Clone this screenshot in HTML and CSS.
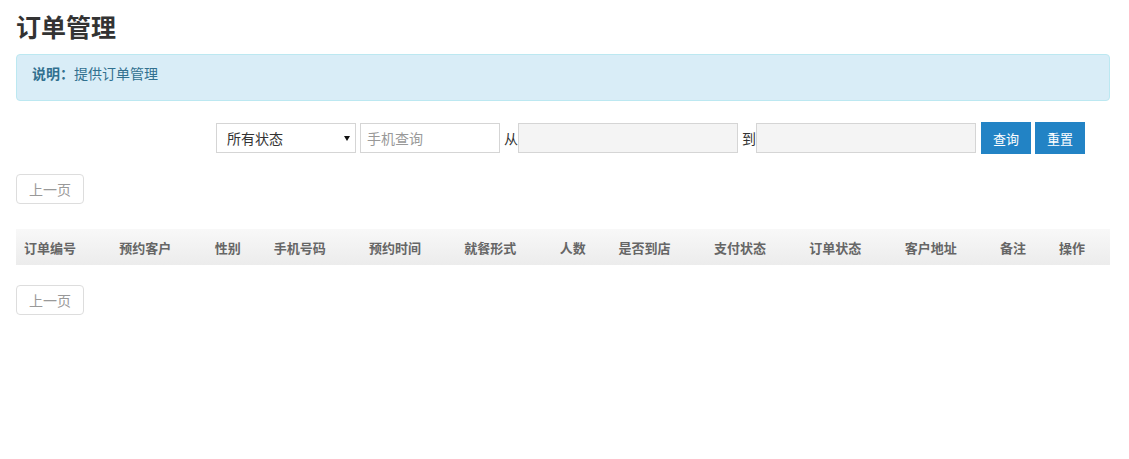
FILE: index.html
```html
<!DOCTYPE html>
<html lang="zh-CN">
<head>
    <meta charset="UTF-8">
    <title>订单管理</title>
    <link rel="stylesheet" href="styles.css">
</head>
<body>

<div class="page">
    <h1>订单管理</h1>

    <div class="alert">
        <b>说明：</b>提供订单管理
    </div>

    <form class="search">
        <div class="select-wrap">
            <select class="status-select">
                <option>所有状态</option>
                <option>已支付</option>
                <option>未支付</option>
            </select>
        </div>
        <input type="text" class="phone" placeholder="手机查询">
        <span class="label">从</span>
        <input type="text" class="date" readonly>
        <span class="label">到</span>
        <input type="text" class="date" readonly>
        <button type="button" class="btn first">查询</button>
        <button type="reset" class="btn">重置</button>
    </form>

    <div class="pager">
        <a href="#" class="page-btn">上一页</a>
    </div>

    <table class="orders">
        <thead>
            <tr>
                <th>订单编号</th>
                <th>预约客户</th>
                <th>性别</th>
                <th>手机号码</th>
                <th>预约时间</th>
                <th>就餐形式</th>
                <th>人数</th>
                <th>是否到店</th>
                <th>支付状态</th>
                <th>订单状态</th>
                <th>客户地址</th>
                <th>备注</th>
                <th>操作</th>
            </tr>
        </thead>
        <tbody></tbody>
    </table>

    <div class="pager">
        <a href="#" class="page-btn">上一页</a>
    </div>
</div>

</body>
</html>
```

FILE: styles.css
```css
body {
    margin: 0;
    font-family: "Noto Sans CJK SC", "Liberation Sans", sans-serif;
    font-size: 14px;
    color: #333;
    background: #fff;
}
.page {
    padding: 0 19px 0 16px;
}
h1 {
    margin: 0;
    padding-top: 9px;
    font-size: 25px;
    line-height: 34px;
    font-weight: bold;
    color: #333;
}
.alert {
    margin-top: 11px;
    padding: 9px 15px 18px;
    line-height: 18px;
    font-size: 14px;
    background-color: #d9edf7;
    border: 1px solid #bce8f1;
    border-radius: 4px;
    color: #31708f;
}
.search {
    display: flex;
    align-items: center;
    margin-top: 21px;
    padding-left: 200px;
    height: 32px;
}
.select-wrap {
    position: relative;
}
.select-wrap::after {
    content: "";
    position: absolute;
    right: 6px;
    top: 13px;
    border-left: 3px solid transparent;
    border-right: 3px solid transparent;
    border-top: 5px solid #111;
    pointer-events: none;
}
.status-select {
    appearance: none;
    -webkit-appearance: none;
    width: 140px;
    height: 30px;
    padding: 0 0 0 10px;
    border: 1px solid #d5d5d5;
    border-radius: 0;
    background: #fff;
    font-family: inherit;
    font-size: 14px;
    color: #333;
}
input {
    box-sizing: border-box;
    height: 30px;
    border: 1px solid #d5d5d5;
    padding: 0 6px;
    font-family: inherit;
    font-size: 14px;
    color: #333;
    outline: none;
}
input::placeholder {
    color: #999;
}
.phone {
    width: 140px;
    margin-left: 4px;
}
.date {
    width: 220px;
    background: #f4f4f4;
}
.label {
    margin: 0 0 0 4px;
    width: 14px;
    line-height: 30px;
}
.btn {
    width: 50px;
    height: 32px;
    margin-left: 4px;
    padding: 0;
    border: none;
    background-color: #2283c5;
    color: #fff;
    font-family: inherit;
    font-size: 13px;
    cursor: pointer;
}
.btn.first {
    margin-left: 5px;
}
.pager {
    margin-top: 20px;
    height: 30px;
}
.page-btn {
    display: inline-block;
    box-sizing: border-box;
    width: 68px;
    height: 30px;
    line-height: 28px;
    text-align: center;
    border: 1px solid #ddd;
    border-radius: 4px;
    color: #999;
    font-size: 14px;
    text-decoration: none;
}
.orders {
    width: 100%;
    margin-top: 25px;
    border-collapse: collapse;
}
.orders th {
    height: 36px;
    padding: 0 8px;
    text-align: left;
    white-space: nowrap;
    font-size: 13px;
    font-weight: bold;
    color: #666;
    background: linear-gradient(to bottom, #f8f8f8, #ececec);
}
```
